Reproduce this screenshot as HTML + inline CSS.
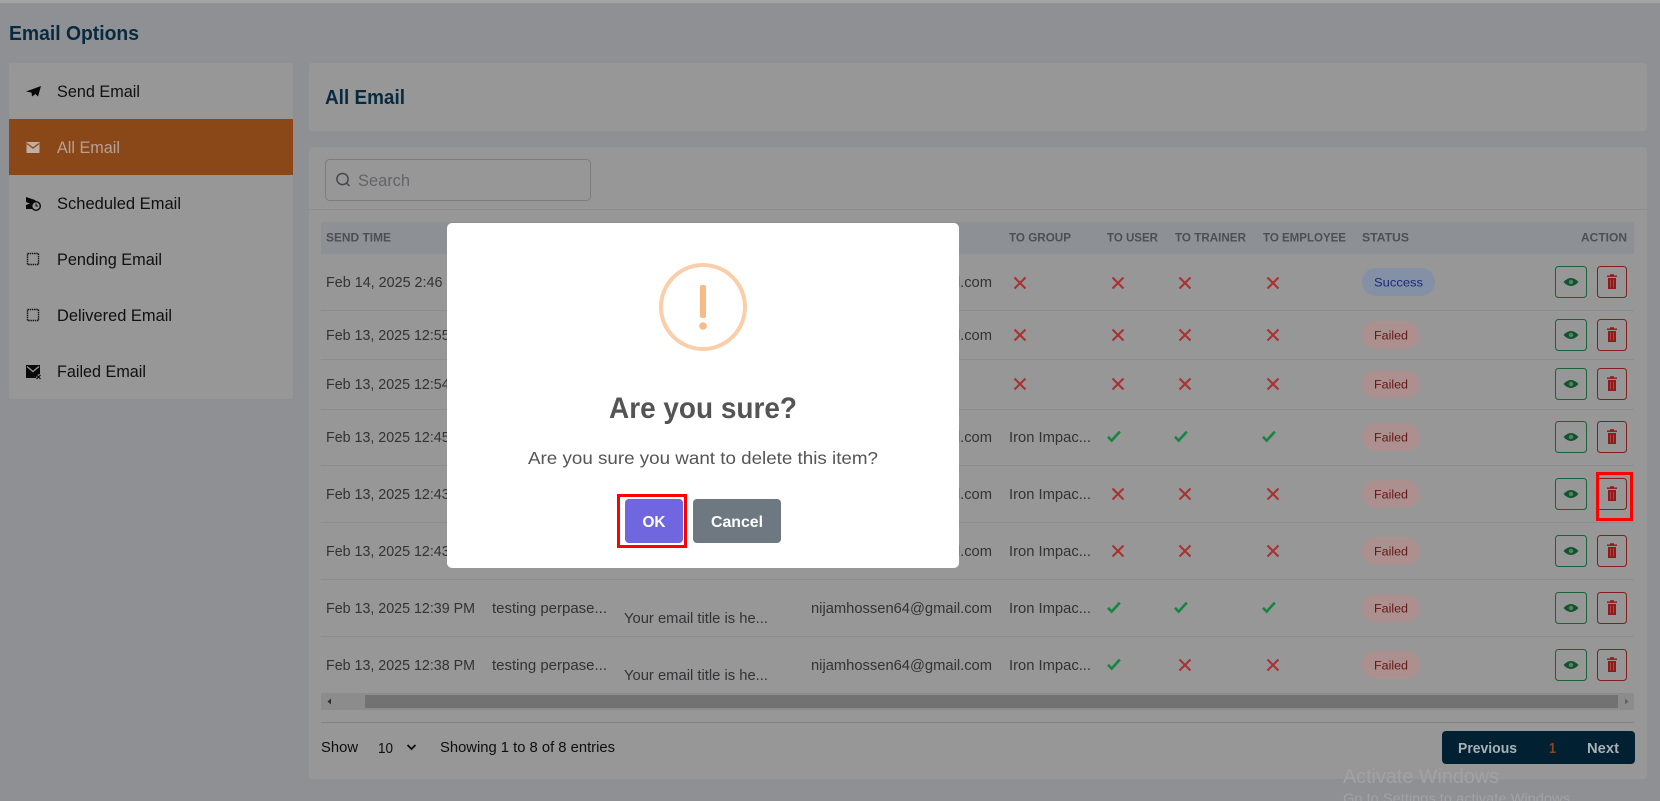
<!DOCTYPE html>
<html><head><meta charset="utf-8"><title>All Email</title>
<style>
html,body{margin:0;padding:0;width:1660px;height:801px;overflow:hidden;background:#8f9094}
svg{display:block;font-family:"Liberation Sans",Arial,sans-serif}
.s{font-size:16.5px;fill:#101010}
.h{font-size:12px;font-weight:700;fill:#4e4f52}
.t{font-size:14.4px;fill:#333335}
.bg{font-size:12.4px}
</style></head><body>
<svg width="1660" height="801" viewBox="0 0 1660 801" xmlns="http://www.w3.org/2000/svg">
<defs>
<g id="x"><path d="M-5.500-5.500 5.500 5.500M5.500-5.500-5.500 5.500" stroke="#a83232" stroke-width="2.100" fill="none"/></g>
<g id="c"><path d="M-6 .8-2.300 4.600 5.800-4.400" stroke="#178442" stroke-width="2.600" fill="none"/></g>
<g id="eb"><rect x="1555.500" y="-15.500" width="31" height="31" rx="3" fill="none" stroke="#186236"/><path d="M1563.500 0Q1571-8 1578.500 0 1571 8 1563.500 0Z" fill="#10562c"/><circle cx="1571" cy="0" r="2.200" fill="#5c7c66"/></g>
<g id="tb"><rect x="1597.500" y="-15.500" width="29" height="31" rx="3" fill="none" stroke="#821e1e"/><path d="M1607-6.500h3v-1.200h4v1.200h3v1.400h-10zM1608-4h8v11h-8z" fill="#8e1a1a"/><path d="M1610.500-2.500v8M1613.500-2.500v8" stroke="#a44c4c" fill="none"/></g>
<g id="fb"><rect x="1362" y="-14" width="58" height="28" rx="14" fill="#ac9090"/><text x="1374" y="4.400" class="bg" fill="#651616" textLength="34" lengthAdjust="spacingAndGlyphs">Failed</text></g>
</defs>

<rect width="1660" height="801" fill="#8f9094"/>
<rect width="1660" height="3" fill="#a3a3a3"/>
<text x="9" y="40" font-size="20" font-weight="700" fill="#082a40" textLength="130" lengthAdjust="spacingAndGlyphs">Email Options</text>

<!-- sidebar -->
<rect x="9" y="63" width="284" height="336" rx="2" fill="#979797"/>
<rect x="9" y="119" width="284" height="56" fill="#8a4718"/>
<path d="M26 91.500 41 86 38 96.500 35.500 94 32 96.500 31.500 92.500Z" fill="#080808"/>
<path d="M26.500 142h13v11h-13z" fill="#bfaea3"/><path d="M27 143.500 33 148 39 143.500" stroke="#8a4718" stroke-width="1.300" fill="none"/>
<path d="M26 197l9 3 3 3-5 3-1 3-6 0v-4l4-1.500-4-1.500z" fill="#080808"/><circle cx="36" cy="206" r="4.300" fill="#979797" stroke="#080808" stroke-width="1.400"/><path d="M36 203.500V206h2" stroke="#080808" fill="none"/>
<rect x="27.500" y="253.500" width="11" height="11" fill="none" stroke="#181818" stroke-width="1.400" stroke-dasharray="1.500 .7"/>
<rect x="27.500" y="309.500" width="11" height="11" fill="none" stroke="#181818" stroke-width="1.400" stroke-dasharray="1.500 .7"/>
<path d="M26 365h14v9l-3 1-1 3H26z" fill="#080808"/><path d="M27 366.500 33 371.500 39 366.500" stroke="#979797" stroke-width="1.300" fill="none"/><path d="M36.500 375 40.500 379M40.500 375 36.500 379" stroke="#080808" stroke-width="1.200"/>
<text x="57" y="97" class="s" textLength="83" lengthAdjust="spacingAndGlyphs">Send Email</text>
<text x="57" y="153" class="s" style="fill:#b6a196" textLength="63" lengthAdjust="spacingAndGlyphs">All Email</text>
<text x="57" y="209" class="s" textLength="124" lengthAdjust="spacingAndGlyphs">Scheduled Email</text>
<text x="57" y="265" class="s" textLength="105" lengthAdjust="spacingAndGlyphs">Pending Email</text>
<text x="57" y="321" class="s" textLength="115" lengthAdjust="spacingAndGlyphs">Delivered Email</text>
<text x="57" y="377" class="s" textLength="89" lengthAdjust="spacingAndGlyphs">Failed Email</text>

<!-- main -->
<rect x="309" y="63" width="1338" height="68" rx="3" fill="#979797"/>
<text x="325" y="104" font-size="20" font-weight="700" fill="#082a40" textLength="80" lengthAdjust="spacingAndGlyphs">All Email</text>
<rect x="309" y="147" width="1338" height="632" rx="3" fill="#979797"/>
<rect x="325.500" y="159.500" width="265" height="41" rx="4" fill="#979797" stroke="#7d7d7d"/>
<circle cx="342.500" cy="179" r="5.600" fill="none" stroke="#424346" stroke-width="1.400"/><path d="M346.500 183 349.500 186" stroke="#424346" stroke-width="1.400"/>
<text x="358" y="186" font-size="16.500" fill="#636468" textLength="52" lengthAdjust="spacingAndGlyphs">Search</text>
<rect x="309" y="209" width="1338" height="1" fill="#8d8d8d"/>
<rect x="321" y="222" width="1313" height="32" fill="#8d9095"/>
<text x="326" y="241.500" class="h" textLength="65" lengthAdjust="spacingAndGlyphs">SEND TIME</text>
<text x="1009" y="241.500" class="h" textLength="62" lengthAdjust="spacingAndGlyphs">TO GROUP</text>
<text x="1107" y="241.500" class="h" textLength="51" lengthAdjust="spacingAndGlyphs">TO USER</text>
<text x="1175" y="241.500" class="h" textLength="71" lengthAdjust="spacingAndGlyphs">TO TRAINER</text>
<text x="1263" y="241.500" class="h" textLength="83" lengthAdjust="spacingAndGlyphs">TO EMPLOYEE</text>
<text x="1362" y="241.500" class="h" textLength="47" lengthAdjust="spacingAndGlyphs">STATUS</text>
<text x="1581" y="241.500" class="h" textLength="46" lengthAdjust="spacingAndGlyphs">ACTION</text>

<g fill="#8c8c8c">
<rect x="321" y="310" width="1313" height="1"/><rect x="321" y="359" width="1313" height="1"/><rect x="321" y="409" width="1313" height="1"/><rect x="321" y="465" width="1313" height="1"/><rect x="321" y="522" width="1313" height="1"/><rect x="321" y="579" width="1313" height="1"/><rect x="321" y="636" width="1313" height="1"/><rect x="321" y="722" width="1313" height="1" fill="#838383"/>
</g>

<!-- rows -->
<g class="t">
<text x="326" y="287" textLength="142" lengthAdjust="spacingAndGlyphs">Feb 14, 2025 2:46 PM</text>
<text x="326" y="340" textLength="149" lengthAdjust="spacingAndGlyphs">Feb 13, 2025 12:55 PM</text>
<text x="326" y="389" textLength="149" lengthAdjust="spacingAndGlyphs">Feb 13, 2025 12:54 PM</text>
<text x="326" y="442" textLength="149" lengthAdjust="spacingAndGlyphs">Feb 13, 2025 12:45 PM</text>
<text x="326" y="499" textLength="149" lengthAdjust="spacingAndGlyphs">Feb 13, 2025 12:43 PM</text>
<text x="326" y="556" textLength="149" lengthAdjust="spacingAndGlyphs">Feb 13, 2025 12:43 PM</text>
<text x="326" y="613" textLength="149" lengthAdjust="spacingAndGlyphs">Feb 13, 2025 12:39 PM</text>
<text x="326" y="670" textLength="149" lengthAdjust="spacingAndGlyphs">Feb 13, 2025 12:38 PM</text>
<text x="492" y="613" textLength="115" lengthAdjust="spacingAndGlyphs">testing perpase...</text>
<text x="492" y="670" textLength="115" lengthAdjust="spacingAndGlyphs">testing perpase...</text>
<text x="624" y="623" textLength="144" lengthAdjust="spacingAndGlyphs">Your email title is he...</text>
<text x="624" y="680" textLength="144" lengthAdjust="spacingAndGlyphs">Your email title is he...</text>
<text x="811" y="287" textLength="181" lengthAdjust="spacingAndGlyphs">nijamhossen64@gmail.com</text>
<text x="811" y="340" textLength="181" lengthAdjust="spacingAndGlyphs">nijamhossen64@gmail.com</text>
<text x="811" y="442" textLength="181" lengthAdjust="spacingAndGlyphs">nijamhossen64@gmail.com</text>
<text x="811" y="499" textLength="181" lengthAdjust="spacingAndGlyphs">nijamhossen64@gmail.com</text>
<text x="811" y="556" textLength="181" lengthAdjust="spacingAndGlyphs">nijamhossen64@gmail.com</text>
<text x="811" y="613" textLength="181" lengthAdjust="spacingAndGlyphs">nijamhossen64@gmail.com</text>
<text x="811" y="670" textLength="181" lengthAdjust="spacingAndGlyphs">nijamhossen64@gmail.com</text>
<text x="1009" y="442" textLength="82" lengthAdjust="spacingAndGlyphs">Iron Impac...</text>
<text x="1009" y="499" textLength="82" lengthAdjust="spacingAndGlyphs">Iron Impac...</text>
<text x="1009" y="556" textLength="82" lengthAdjust="spacingAndGlyphs">Iron Impac...</text>
<text x="1009" y="613" textLength="82" lengthAdjust="spacingAndGlyphs">Iron Impac...</text>
<text x="1009" y="670" textLength="82" lengthAdjust="spacingAndGlyphs">Iron Impac...</text>
</g>

<use href="#x" x="1020" y="283"/><use href="#x" x="1118" y="283"/><use href="#x" x="1185" y="283"/><use href="#x" x="1273" y="283"/>
<use href="#x" x="1020" y="335"/><use href="#x" x="1118" y="335"/><use href="#x" x="1185" y="335"/><use href="#x" x="1273" y="335"/>
<use href="#x" x="1020" y="384"/><use href="#x" x="1118" y="384"/><use href="#x" x="1185" y="384"/><use href="#x" x="1273" y="384"/>
<use href="#c" x="1114" y="436"/><use href="#c" x="1181" y="436"/><use href="#c" x="1269" y="436"/>
<use href="#x" x="1118" y="494"/><use href="#x" x="1185" y="494"/><use href="#x" x="1273" y="494"/>
<use href="#x" x="1118" y="551"/><use href="#x" x="1185" y="551"/><use href="#x" x="1273" y="551"/>
<use href="#c" x="1114" y="607"/><use href="#c" x="1181" y="607"/><use href="#c" x="1269" y="607"/>
<use href="#c" x="1114" y="664"/><use href="#x" x="1185" y="665"/><use href="#x" x="1273" y="665"/>

<rect x="1362" y="268" width="73" height="28" rx="14" fill="#8490a6"/>
<text x="1374" y="286.400" class="bg" fill="#1a2a76" textLength="49" lengthAdjust="spacingAndGlyphs">Success</text>
<use href="#fb" y="335"/><use href="#fb" y="384"/><use href="#fb" y="437"/><use href="#fb" y="494"/><use href="#fb" y="551"/><use href="#fb" y="608"/><use href="#fb" y="665"/>

<use href="#eb" y="282"/><use href="#eb" y="335"/><use href="#eb" y="384"/><use href="#eb" y="437"/><use href="#eb" y="494"/><use href="#eb" y="551"/><use href="#eb" y="608"/><use href="#eb" y="665"/>
<use href="#tb" y="282"/><use href="#tb" y="335"/><use href="#tb" y="384"/><use href="#tb" y="437"/><use href="#tb" y="494"/><use href="#tb" y="551"/><use href="#tb" y="608"/><use href="#tb" y="665"/>

<!-- scrollbar -->
<rect x="321" y="693" width="1313" height="17" fill="#8c8c8c"/>
<rect x="365" y="695" width="1253" height="13" fill="#727272"/>
<path d="M331 698.500v6l-3.500-3z" fill="#2e2e2e"/><path d="M1625 698.500v6l3.500-3z" fill="#626262"/>

<!-- footer -->
<text x="321" y="752" font-size="14.400" fill="#0e0e0e" textLength="37" lengthAdjust="spacingAndGlyphs">Show</text>
<text x="378" y="753" font-size="14.400" fill="#0e0e0e" textLength="15" lengthAdjust="spacingAndGlyphs">10</text>
<path d="M407.500 745 411.500 749 415.500 745" stroke="#0e0e0e" stroke-width="1.800" fill="none"/>
<text x="440" y="752" font-size="14.400" fill="#0e0e0e" textLength="175" lengthAdjust="spacingAndGlyphs">Showing 1 to 8 of 8 entries</text>
<rect x="1442" y="731" width="193" height="33" rx="4" fill="#012132"/>
<text x="1458" y="753" font-size="14.400" font-weight="700" fill="#a9b0b4" textLength="59" lengthAdjust="spacingAndGlyphs">Previous</text>
<text x="1549" y="753" font-size="14.400" font-weight="700" fill="#8a4718" textLength="7" lengthAdjust="spacingAndGlyphs">1</text>
<text x="1587" y="753" font-size="14.400" font-weight="700" fill="#a9b0b4" textLength="32" lengthAdjust="spacingAndGlyphs">Next</text>

<text x="1343" y="783" font-size="20" fill="#a2a2a4" textLength="156" lengthAdjust="spacingAndGlyphs">Activate Windows</text>
<text x="1343" y="803" font-size="14" fill="#a2a2a4" textLength="231" lengthAdjust="spacingAndGlyphs">Go to Settings to activate Windows.</text>

<!-- right red highlight -->
<rect x="1597.500" y="473.500" width="34" height="46" fill="none" stroke="#f00" stroke-width="3"/>

<!-- modal -->
<rect x="447" y="223" width="512" height="345" rx="5" fill="#fff"/>
<circle cx="703" cy="307" r="42" fill="none" stroke="#facea8" stroke-width="4"/>
<rect x="700" y="285" width="6" height="33" rx="2" fill="#f8bb86"/>
<circle cx="703" cy="326" r="3.800" fill="#f8bb86"/>
<text x="609" y="418" font-size="30" font-weight="700" fill="#545454" textLength="188" lengthAdjust="spacingAndGlyphs">Are you sure?</text>
<text x="528" y="464" font-size="17.600" fill="#545454" textLength="350" lengthAdjust="spacingAndGlyphs">Are you sure you want to delete this item?</text>
<rect x="618.500" y="495.500" width="67" height="51" fill="#fff" stroke="#f00" stroke-width="3"/>
<rect x="625" y="499" width="58" height="44" rx="4" fill="#7066e0"/>
<text x="642.500" y="527" font-size="16" font-weight="700" fill="#fff" textLength="23" lengthAdjust="spacingAndGlyphs">OK</text>
<rect x="693" y="499" width="88" height="44" rx="4" fill="#6e7881"/>
<text x="711" y="527" font-size="16" font-weight="700" fill="#fff" textLength="52" lengthAdjust="spacingAndGlyphs">Cancel</text>
</svg>
</body></html>
